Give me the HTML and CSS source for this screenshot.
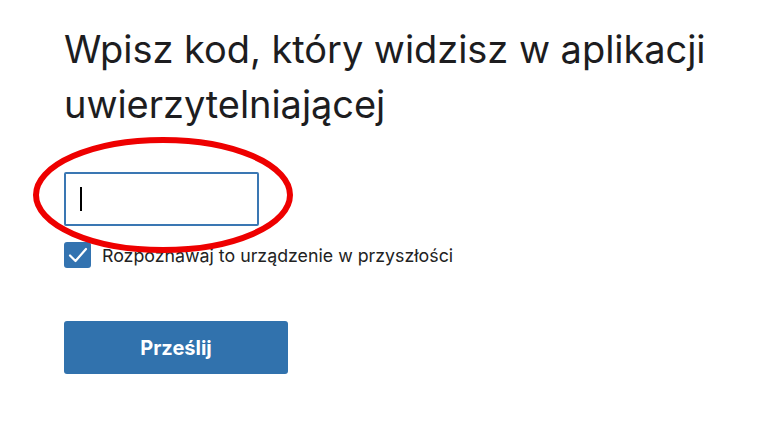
FILE: index.html
```html
<!DOCTYPE html>
<html lang="pl">
<head>
  <meta charset="UTF-8">
  <meta name="viewport" content="width=device-width, initial-scale=1.0">
  <title>Weryfikacja dwuetapowa</title>
  <link rel="stylesheet" href="styles.css">
</head>
<body>
  <div class="mfa_area">
    <h1 class="mfa_tit">Wpisz kod, który widzisz w aplikacji uwierzytelniającej</h1>
    <div class="code_field" role="textbox" aria-label="Kod">
      <span class="caret"></span>
      <!-- zaznaczenie na zrzucie -->
      <svg class="mark_circle" width="270" height="122" viewBox="0 0 270 122" aria-hidden="true">
        <ellipse cx="131" cy="61" rx="127" ry="55" fill="none" stroke="#ee0000" stroke-width="6"/>
      </svg>
    </div>
    <label class="remember_row">
      <span class="check_box">
        <svg width="20" height="16" viewBox="0 0 20 16"><path d="M2 8.5 L7.5 14 L18 2" fill="none" stroke="#fff" stroke-width="2.2" stroke-linecap="round" stroke-linejoin="round"/></svg>
      </span>
      <span class="remember_text">Rozpoznawaj to urządzenie w przyszłości</span>
    </label>
    <button class="btn_submit" type="button">Prześlij</button>
  </div>
</body>
</html>
```
FILE: styles.css
```css
*{margin:0;padding:0;box-sizing:border-box;}
html,body{width:100%;height:100%;background:#fff;}
body{font-family:Inter,"Liberation Sans",sans-serif;color:#1d1d1f;}
.mfa_area{padding:22px 0 0 64px;}
.mfa_tit{font-size:38px;line-height:55px;font-weight:400;width:690px;letter-spacing:-0.05px;margin-bottom:40px;}
.code_field{position:relative;width:195px;height:54px;border:2px solid #3a77b3;border-radius:2px;display:flex;align-items:center;padding-left:14px;}
.caret{display:block;width:2px;height:24px;background:#000;}
.mark_circle{position:absolute;left:-34px;top:-40px;pointer-events:none;z-index:2;}
.remember_row{display:flex;align-items:center;gap:11px;margin-top:16px;}
.check_box{width:27px;height:26px;border-radius:3px;background:#3373b0;display:flex;align-items:center;justify-content:center;}
.remember_text{font-size:17.8px;color:#222;}
.btn_submit{display:block;margin-top:53px;width:224px;height:53px;border:0;border-radius:3px;background:#3172ad;color:#fff;font-family:inherit;font-size:20px;font-weight:700;}
```
